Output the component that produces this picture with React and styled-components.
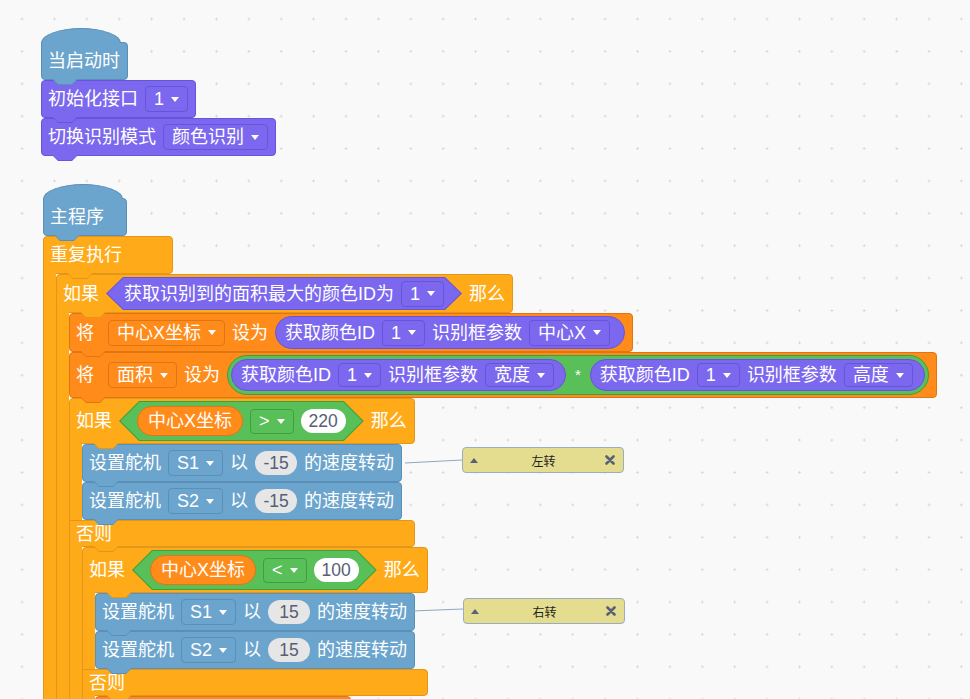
import React from "react";
import styled, { createGlobalStyle, css } from "styled-components";

// block palette: fill + outline
const C = {
  event: { fill: "#6ba4cd", edge: "#5a8fb8" },
  sensor: { fill: "#7b68ee", edge: "#6854d9" },
  control: { fill: "#ffab19", edge: "#e3961a" },
  data: { fill: "#ff8c1a", edge: "#e07511" },
  op: { fill: "#59c059", edge: "#3f9f3f" },
};

const GlobalStyle = createGlobalStyle`
  html, body {
    margin: 0;
    padding: 0;
    overflow: hidden;
  }
  body {
    font-family: "Liberation Sans", "Noto Sans CJK SC", sans-serif;
  }
`;

const Workspace = styled.div`
  position: relative;
  width: 970px;
  height: 699px;
  overflow: hidden;
  white-space: nowrap;
  background-color: #f9f9f9;
  background-image: radial-gradient(circle, #d6d6d6 0.9px, transparent 1.4px);
  background-size: 32.4px 32.4px;
  background-position: 5.9px 2.8px;
`;

const Stack = styled.div`
  position: absolute;
  left: ${(p) => p.$x}px;
  top: ${(p) => p.$y}px;
  display: flex;
  flex-direction: column;
  align-items: flex-start;
`;

// the little connector tab hanging under a block
const tab = (offset) => css`
  &::before,
  &::after {
    content: "";
    position: absolute;
    top: 100%;
    z-index: 3;
  }
  &::before {
    left: ${offset - 1}px;
    width: 26px;
    height: 6px;
    background: ${(p) => p.$c.edge};
    clip-path: polygon(0 0, 26px 0, 20px 6px, 6px 6px);
  }
  &::after {
    left: ${offset}px;
    width: 24px;
    height: 5px;
    background: ${(p) => p.$c.fill};
    clip-path: polygon(0 0, 24px 0, 19px 5px, 5px 5px);
  }
`;

const shell = css`
  position: relative;
  box-sizing: border-box;
  display: flex;
  align-items: center;
  gap: 7px;
  min-height: ${(p) => p.$h || 38}px;
  padding: ${(p) => (p.$h && p.$h < 30 ? 0 : 2)}px 7px ${(p) => (p.$h && p.$h < 30 ? 0 : 2)}px 6px;
  background: ${(p) => p.$c.fill};
  border: 1px solid ${(p) => p.$c.edge};
  color: #fff;
  font-size: 18px;
  line-height: 22px;
`;

const Block = styled.div`
  ${shell}
  width: max-content;
  border-radius: 4px;
  ${tab(11)}
`;

const Hat = styled(Block)`
  min-width: 84px;
  border-top-left-radius: 0;
`;

const HatCap = styled.span`
  position: absolute;
  left: -1px;
  top: -15px;
  width: 80px;
  height: 15px;
  box-sizing: border-box;
  background: ${(p) => p.$c.fill};
  border: 1px solid ${(p) => p.$c.edge};
  border-bottom: none;
  border-radius: 40px 40px 0 0 / 15px 15px 0 0;
`;

const CBlock = styled.div`
  display: flex;
  flex-direction: column;
  align-items: stretch;
  width: max-content;
`;

const CBar = styled.div`
  ${shell}
  min-width: ${(p) => p.$minW || 0}px;
  border-radius: ${(p) => p.$round || "0 4px 4px 0"};
  ${(p) => tab(p.$tabAt ?? 24)}
`;

const Mouth = styled.div`
  display: flex;
  min-height: 24px;
`;

const Arm = styled.div`
  position: relative;
  flex: 0 0 13px;
  box-sizing: border-box;
  margin: -1px 0;
  background: ${(p) => p.$c.fill};
  border-left: 1px solid ${(p) => p.$c.edge};
`;

const Slot = styled.div`
  flex: 0 0 0;
  width: 0;
  min-width: 0;
  display: flex;
  flex-direction: column;
  align-items: flex-start;
`;

const Label = styled.span`
  flex-shrink: 0;
  margin-right: ${(p) => (p.$wide ? 7 : 0)}px;
`;

const Field = styled.span`
  flex-shrink: 0;
  display: inline-flex;
  align-items: center;
  gap: 7px;
  box-sizing: border-box;
  height: ${(p) => p.$h || 26}px;
  padding: 0 8px;
  background: ${(p) => p.$c.fill};
  border: 1px solid ${(p) => p.$c.edge};
  border-radius: 4px;
  color: #fff;
`;

const Caret = styled.span`
  width: 0;
  height: 0;
  border-left: 4.5px solid transparent;
  border-right: 4.5px solid transparent;
  border-top: 5px solid #fff;
`;

const Pill = styled.span`
  flex-shrink: 0;
  display: inline-flex;
  align-items: center;
  gap: ${(p) => p.$gap ?? 7}px;
  box-sizing: border-box;
  height: ${(p) => p.$h}px;
  padding: 0 ${(p) => p.$pr ?? 11}px 0 ${(p) => p.$pl ?? 9}px;
  background: ${(p) => p.$c.fill};
  border: 1px solid ${(p) => p.$c.edge};
  border-radius: 999px;
  color: #fff;
`;

const Num = styled.span`
  flex-shrink: 0;
  display: inline-flex;
  align-items: center;
  justify-content: center;
  box-sizing: border-box;
  height: 24px;
  min-width: 42px;
  padding: 0 8px;
  border-radius: 12px;
  background: ${(p) => (p.$dim ? "#e6e6e6" : "#ffffff")};
  color: #575e75;
  font-size: 17.5px;
`;

const hexPoints = (t) =>
  `polygon(${t}px 0, calc(100% - ${t}px) 0, 100% 50%, calc(100% - ${t}px) 100%, ${t}px 100%, 0 50%)`;

const Hex = styled.span`
  flex-shrink: 0;
  position: relative;
  display: inline-flex;
  align-items: center;
  gap: 7px;
  box-sizing: border-box;
  height: ${(p) => p.$h}px;
  padding: 0 18px;
  background: ${(p) => p.$c.edge};
  clip-path: ${(p) => hexPoints(Math.round(p.$h / 2))};
  color: #fff;

  &::before {
    content: "";
    position: absolute;
    inset: 1px 1.5px;
    z-index: -1;
    background: ${(p) => p.$c.fill};
    clip-path: ${(p) => hexPoints(Math.round(p.$h / 2) - 1)};
  }
`;

const Star = styled.span`
  flex-shrink: 0;
  font-size: 15px;
  margin: 0 1px;
`;

const Links = styled.svg`
  position: absolute;
  left: 0;
  top: 0;
  pointer-events: none;
`;

const Note = styled.div`
  position: absolute;
  left: ${(p) => p.$x}px;
  top: ${(p) => p.$y}px;
  width: 162px;
  height: 26px;
  box-sizing: border-box;
  display: grid;
  grid-template-columns: 12px 1fr 12px;
  align-items: center;
  padding: 0 6px 0 7px;
  background: #e4dc8e;
  border: 1px solid #9cadbf;
  border-radius: 4px;
  font-family: "Noto Sans CJK SC", sans-serif;
  font-size: 12px;
  color: #1f1f1f;
`;

const NoteText = styled.span`
  text-align: center;
`;

const Fold = styled.span`
  width: 0;
  height: 0;
  border-left: 4px solid transparent;
  border-right: 4px solid transparent;
  border-bottom: 5px solid #596178;
`;

function Close() {
  return (
    <svg width="10" height="10" viewBox="0 0 10 10">
      <path d="M1.5 1.5 L8.5 8.5 M8.5 1.5 L1.5 8.5" stroke="#596178" strokeWidth="2.6" strokeLinecap="round" />
    </svg>
  );
}

function Dropdown({ c, h, children }) {
  return (
    <Field $c={c} $h={h}>
      {children}
      <Caret />
    </Field>
  );
}

function BoxParam({ h, fieldH, pr, param }) {
  return (
    <Pill $c={C.sensor} $h={h} $pr={pr}>
      <Label>获取颜色ID</Label>
      <Dropdown c={C.sensor} h={fieldH}>1</Dropdown>
      <Label>识别框参数</Label>
      <Dropdown c={C.sensor} h={fieldH}>{param}</Dropdown>
    </Pill>
  );
}

function Servo({ port, speed }) {
  return (
    <Block $c={C.event}>
      <Label>设置舵机</Label>
      <Dropdown c={C.event}>{port}</Dropdown>
      <Label>以</Label>
      <Num $dim>{speed}</Num>
      <Label>的速度转动</Label>
    </Block>
  );
}

function Compare({ op, value }) {
  return (
    <Hex $c={C.op} $h={40}>
      <Pill $c={C.data} $h={30} $pl={10} $pr={10}>
        中心X坐标
      </Pill>
      <Dropdown c={C.op} h={25}>{op}</Dropdown>
      <Num>{value}</Num>
    </Hex>
  );
}

function IfElse({ cond, then, otherwise }) {
  return (
    <CBlock>
      <CBar $c={C.control} $round="4px 4px 4px 0">
        <Label>如果</Label>
        {cond}
        <Label>那么</Label>
      </CBar>
      <Mouth>
        <Arm $c={C.control} />
        <Slot>{then}</Slot>
      </Mouth>
      <CBar $c={C.control} $h={27}>
        <Label>否则</Label>
      </CBar>
      <Mouth>
        <Arm $c={C.control} />
        <Slot>{otherwise}</Slot>
      </Mouth>
      <CBar $c={C.control} $h={20} $tabAt={11} $round="0 4px 4px 4px" />
    </CBlock>
  );
}

export default function App() {
  return (
    <>
      <GlobalStyle />
      <Workspace>
        <Stack $x={41} $y={42}>
          <Hat $c={C.event}>
            <HatCap $c={C.event} />
            <Label>当启动时</Label>
          </Hat>
          <Block $c={C.sensor}>
            <Label>初始化接口</Label>
            <Dropdown c={C.sensor}>1</Dropdown>
          </Block>
          <Block $c={C.sensor}>
            <Label>切换识别模式</Label>
            <Dropdown c={C.sensor}>颜色识别</Dropdown>
          </Block>
        </Stack>

        <Stack $x={43} $y={198}>
          <Hat $c={C.event}>
            <HatCap $c={C.event} />
            <Label>主程序</Label>
          </Hat>
          <CBlock>
            <CBar $c={C.control} $minW={130} $round="4px 4px 4px 0">
              <Label>重复执行</Label>
            </CBar>
            <Mouth>
              <Arm $c={C.control} />
              <Slot>
                <CBlock>
                  <CBar $c={C.control} $round="4px 4px 4px 0">
                    <Label>如果</Label>
                    <Hex $c={C.sensor} $h={33}>
                      <Label>获取识别到的面积最大的颜色ID为</Label>
                      <Dropdown c={C.sensor}>1</Dropdown>
                    </Hex>
                    <Label>那么</Label>
                  </CBar>
                  <Mouth>
                    <Arm $c={C.control} />
                    <Slot>
                      <Block $c={C.data}>
                        <Label $wide>将</Label>
                        <Dropdown c={C.data}>中心X坐标</Dropdown>
                        <Label>设为</Label>
                        <BoxParam h={33} pr={14} param="中心X" />
                      </Block>
                      <Block $c={C.data}>
                        <Label $wide>将</Label>
                        <Dropdown c={C.data}>面积</Dropdown>
                        <Label>设为</Label>
                        <Pill $c={C.op} $h={40} $pl={3} $pr={3} $gap={8}>
                          <BoxParam h={32} fieldH={24} param="宽度" />
                          <Star>*</Star>
                          <BoxParam h={32} fieldH={24} param="高度" />
                        </Pill>
                      </Block>
                      <IfElse
                        cond={<Compare op=">" value="220" />}
                        then={
                          <>
                            <Servo port="S1" speed="-15" />
                            <Servo port="S2" speed="-15" />
                          </>
                        }
                        otherwise={
                          <IfElse
                            cond={<Compare op="<" value="100" />}
                            then={
                              <>
                                <Servo port="S1" speed="15" />
                                <Servo port="S2" speed="15" />
                              </>
                            }
                            otherwise={
                              <>
                                <Block $c={C.data}>
                                  <Label $wide>将</Label>
                                  <Dropdown c={C.data}>中心X坐标</Dropdown>
                                  <Label>设为</Label>
                                  <Num>0</Num>
                                </Block>
                                <Servo port="S1" speed="0" />
                              </>
                            }
                          />
                        }
                      />
                    </Slot>
                  </Mouth>
                  <CBar $c={C.control} $h={20} $tabAt={11} $round="0 4px 4px 4px" />
                </CBlock>
              </Slot>
            </Mouth>
            <CBar $c={C.control} $h={20} $tabAt={11} $round="0 4px 4px 4px" />
          </CBlock>
        </Stack>

        <Links width="970" height="699">
          <line x1="405" y1="463" x2="462" y2="460" stroke="#8fa7bf" strokeWidth="1" />
          <line x1="412" y1="611" x2="463" y2="609" stroke="#8fa7bf" strokeWidth="1" />
        </Links>

        <Note $x={462} $y={447}>
          <Fold />
          <NoteText>左转</NoteText>
          <Close />
        </Note>
        <Note $x={463} $y={598}>
          <Fold />
          <NoteText>右转</NoteText>
          <Close />
        </Note>
      </Workspace>
    </>
  );
}
